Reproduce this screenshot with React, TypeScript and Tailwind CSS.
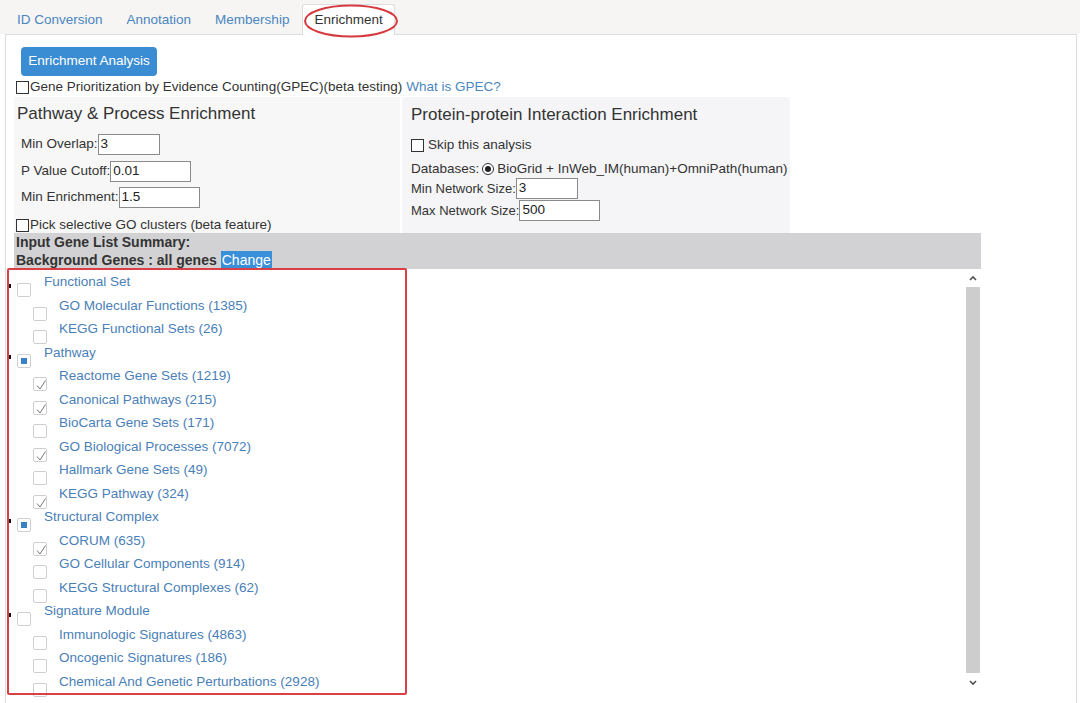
import React from 'react';

type Item = { label: string; checked?: boolean };
type Group = { title: string; state: 'none' | 'partial'; items: Item[] };

const groups: Group[] = [
  {
    title: 'Functional Set',
    state: 'none',
    items: [{ label: 'GO Molecular Functions (1385)' }, { label: 'KEGG Functional Sets (26)' }],
  },
  {
    title: 'Pathway',
    state: 'partial',
    items: [
      { label: 'Reactome Gene Sets (1219)', checked: true },
      { label: 'Canonical Pathways (215)', checked: true },
      { label: 'BioCarta Gene Sets (171)' },
      { label: 'GO Biological Processes (7072)', checked: true },
      { label: 'Hallmark Gene Sets (49)' },
      { label: 'KEGG Pathway (324)', checked: true },
    ],
  },
  {
    title: 'Structural Complex',
    state: 'partial',
    items: [
      { label: 'CORUM (635)', checked: true },
      { label: 'GO Cellular Components (914)' },
      { label: 'KEGG Structural Complexes (62)' },
    ],
  },
  {
    title: 'Signature Module',
    state: 'none',
    items: [
      { label: 'Immunologic Signatures (4863)' },
      { label: 'Oncogenic Signatures (186)' },
      { label: 'Chemical And Genetic Perturbations (2928)' },
    ],
  },
];

const Box = ({ checked, partial }: { checked?: boolean; partial?: boolean }) => (
  <span className="relative mt-[10px] flex h-[14px] w-[14px] shrink-0 items-center justify-center rounded-[2px] border border-[#cfcfcf] bg-white">
    {partial && <span className="h-[6px] w-[6px] bg-[#3a80c4]" />}
    {checked && (
      <svg width="14" height="14" viewBox="0 0 14 14" className="absolute left-[0px] top-[0px]">
        <path d="M3 7.5 L6 11 L11.5 2.5" fill="none" stroke="#777" strokeWidth="1" />
      </svg>
    )}
  </span>
);

const OldCheck = () => (
  <span className="inline-block h-[13px] w-[13px] shrink-0 border border-[#333] bg-white" />
);

const Input = ({ value, w }: { value: string; w: string }) => (
  <span className={`flex h-[21px] items-center border border-[#8a8a8a] bg-white pl-[2px] text-[13.5px] text-[#222] ${w}`}>
    {value}
  </span>
);

const App = () => {
  return (
    <div className="relative h-[703px] w-[1080px] overflow-hidden bg-white font-['Liberation_Sans',Arial,sans-serif] text-[13.5px] text-[#333]">
      {/* Tabs */}
      <div className="flex h-[34px] items-end gap-[1px] bg-[#f6f5f4] pl-[5px]">
        <div className="flex h-[30px] items-center px-[12px] pt-[2px] text-[#4a86c0]">ID Conversion</div>
        <div className="flex h-[30px] items-center px-[11px] pt-[2px] text-[#4a86c0]">Annotation</div>
        <div className="flex h-[30px] items-center px-[12px] pt-[2px] text-[#4a86c0]">Membership</div>
        <div className="relative -mb-px flex h-[31px] items-center rounded-t-[3px] border border-b-0 border-[#ddd] bg-white px-[11px] pt-[1px] text-[#333]">
          Enrichment
        </div>
      </div>

      {/* Tab content */}
      <div className="ml-[5px] h-[669px] w-[1072px] border border-b-0 border-[#ddd] pl-[8px] pt-[12px]">
        <button className="ml-[7px] h-[29px] w-[136px] rounded-[4px] bg-[#3b8dd3] text-[13.5px] text-white">
          Enrichment Analysis
        </button>
        <div className="mt-[3px] flex h-[16px] items-center pl-[2px]">
          <OldCheck />
          <span className="ml-[1px]">Gene Prioritization by Evidence Counting(GPEC)(beta testing)</span>
          <span className="ml-[4px] text-[#4a86c0]">What is GPEC?</span>
        </div>

        {/* Two panels */}
        <div className="mt-[2px] flex gap-[2px]">
          <div className="flex h-[136px] w-[386px] flex-col bg-[#f7f7f7] pt-[6px]">
            <div className="h-[22px] pl-[3px] text-[17px] leading-[22px] text-[#333]">Pathway &amp; Process Enrichment</div>
            <div className="mt-[9px] flex items-center pl-[7px]">
              <span>Min Overlap:</span>
              <Input value="3" w="w-[62px]" />
            </div>
            <div className="mt-[6px] flex items-center pl-[7px]">
              <span>P Value Cutoff:</span>
              <Input value="0.01" w="w-[81px]" />
            </div>
            <div className="mt-[5px] flex items-center pl-[7px]">
              <span>Min Enrichment:</span>
              <Input value="1.5" w="w-[81px]" />
            </div>
            <div className="mt-[9px] flex h-[16px] items-center pl-[2px]">
              <OldCheck />
              <span className="ml-[1px]">Pick selective GO clusters (beta feature)</span>
            </div>
          </div>
          <div className="flex h-[136px] w-[388px] flex-col bg-[#f5f5f7] pl-[9px] pt-[7px]">
            <div className="h-[22px] text-[17px] leading-[22px] text-[#333]">Protein-protein Interaction Enrichment</div>
            <div className="mt-[11px] flex h-[16px] items-center">
              <OldCheck />
              <span className="ml-[4px]">Skip this analysis</span>
            </div>
            <div className="mt-[8px] flex h-[16px] items-center">
              <span>Databases:</span>
              <span className="ml-[3px] flex h-[12px] w-[12px] items-center justify-center rounded-full border border-[#333] bg-white">
                <span className="h-[6px] w-[6px] rounded-full bg-[#222]" />
              </span>
              <span className="ml-[3px]">BioGrid + InWeb_IM(human)+OmniPath(human)</span>
            </div>
            <div className="mt-[1px] flex items-center text-[13px]">
              <span>Min Network Size:</span>
              <Input value="3" w="w-[62px]" />
            </div>
            <div className="mt-[1px] flex items-center text-[13px]">
              <span>Max Network Size:</span>
              <Input value="500" w="w-[81px]" />
            </div>
          </div>
        </div>

        {/* Summary bar */}
        <div className="w-[967px] bg-[#d2d2d4] pl-[2px] text-[14px] font-bold leading-[17px] text-[#333]">
          <div className="pt-[1px]">Input Gene List Summary:</div>
          <div className="flex items-center">
            <span>Background Genes : all genes</span>
            <span className="ml-[4px] flex h-[18px] items-center bg-[#3a8fd9] px-[1px] text-[14px] font-normal text-white">Change</span>
          </div>
        </div>

        {/* List box */}
        <div className="flex h-[426px] w-[967px]">
          <div className="flex-1 pt-[4px]">
            {groups.map((g) => (
              <div key={g.title}>
                <div className="relative flex h-[23.5px] pl-[3px]">
                  <span className="absolute left-[-6px] top-[11px] h-[4px] w-[3px] bg-[#111]" />
                  <Box partial={g.state === 'partial'} />
                  <span className="ml-[13px] leading-[18px] text-[#4a80b8]">{g.title}</span>
                </div>
                {g.items.map((it) => (
                  <div key={it.label} className="flex h-[23.5px] pl-[19px]">
                    <Box checked={it.checked} />
                    <span className="ml-[12px] leading-[18px] text-[#4a80b8]">{it.label}</span>
                  </div>
                ))}
              </div>
            ))}
          </div>
          <div className="flex w-[16px] flex-col items-center">
            <div className="flex h-[18px] w-full items-center justify-center">
              <svg width="8" height="6" viewBox="0 0 8 6">
                <path d="M1 5 L4 2 L7 5" fill="none" stroke="#505050" strokeWidth="1.6" />
              </svg>
            </div>
            <div className="h-[386px] w-[14px] bg-[#cdcdcd]" />
            <div className="flex h-[20px] w-full items-center justify-center">
              <svg width="8" height="6" viewBox="0 0 8 6">
                <path d="M1 1 L4 4 L7 1" fill="none" stroke="#505050" strokeWidth="1.6" />
              </svg>
            </div>
          </div>
        </div>
      </div>

      {/* Annotations */}
      <svg className="pointer-events-none absolute left-[303px] top-[3px]" width="96" height="36" viewBox="0 0 96 36">
        <ellipse cx="48" cy="18" rx="46" ry="15.5" fill="none" stroke="#d63a3f" strokeWidth="2" />
      </svg>
      <div className="pointer-events-none absolute left-[7px] top-[268px] h-[427px] w-[400px] rounded-[2px] border-2 border-[#d94046]" />
    </div>
  );
};

export default App;
